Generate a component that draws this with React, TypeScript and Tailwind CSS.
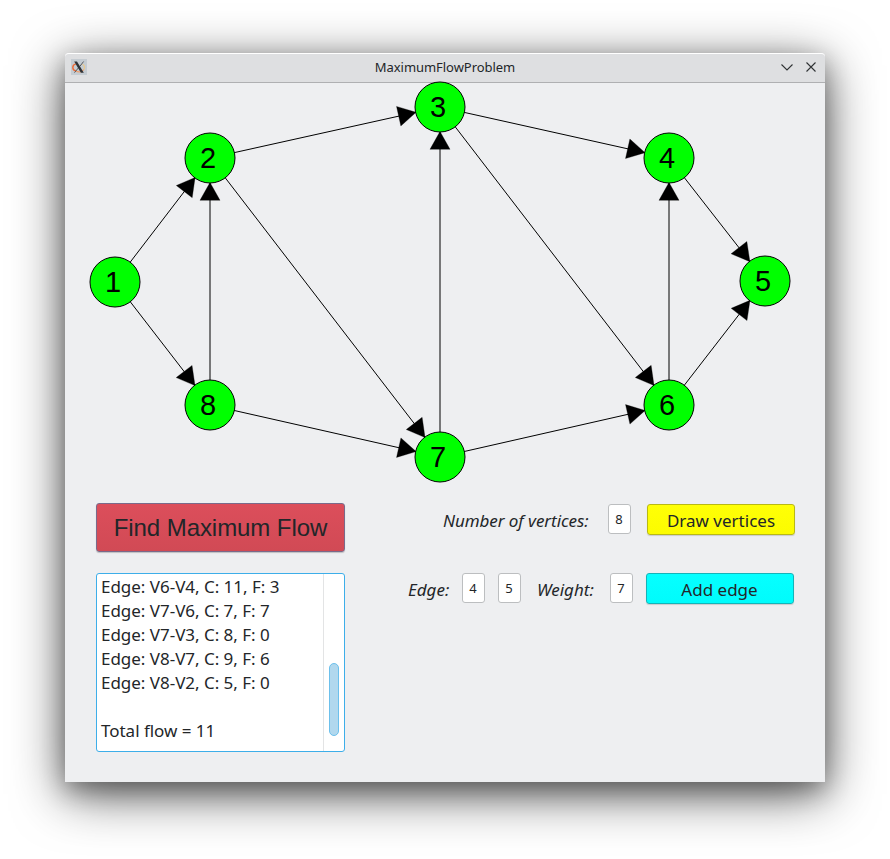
import React from "react";

const R = 25;
const ARROW = 20;

const nodes: Record<number, [number, number]> = {
  1: [115, 282],
  2: [210, 158],
  3: [440, 107],
  4: [669, 158],
  5: [765, 281],
  6: [669, 405],
  7: [440, 457],
  8: [210, 405],
};

const edges: [number, number][] = [
  [1, 2], [1, 8], [2, 3], [2, 7], [8, 2], [8, 7], [7, 3],
  [3, 4], [3, 6], [7, 6], [6, 4], [4, 5], [6, 5],
];

function Edge({ from, to }: { from: number; to: number }) {
  const [x1, y1] = nodes[from];
  const [x2, y2] = nodes[to];
  const d = Math.hypot(x2 - x1, y2 - y1);
  const ux = (x2 - x1) / d;
  const uy = (y2 - y1) / d;
  const tx = x2 - ux * (R - 0.5);
  const ty = y2 - uy * (R - 0.5);
  const h = ARROW * Math.sin(Math.PI / 3) + 0.5;
  const bx = tx - ux * h;
  const by = ty - uy * h;
  const w = ARROW / 2;
  return (
    <g>
      <line x1={x1} y1={y1} x2={tx} y2={ty} stroke="#000" strokeWidth={1} />
      <polygon
        points={`${tx},${ty} ${bx - uy * w},${by + ux * w} ${bx + uy * w},${by - ux * w}`}
        fill="#000"
        stroke="#000"
        strokeWidth={0.3}
      />
    </g>
  );
}

function Graph() {
  return (
    <svg className="block shrink-0 overflow-visible" width="760" height="405" viewBox="65 83 760 405">
      {edges.map(([a, b]) => (
        <Edge key={`${a}-${b}`} from={a} to={b} />
      ))}
      {Object.entries(nodes).map(([id, [x, y]]) => (
        <g key={id}>
          <circle cx={x} cy={y} r={R} fill="#00ff00" stroke="#000" strokeWidth={1} />
          <text x={x - 10} y={y + 10} className="font-['Liberation_Sans',sans-serif] text-[29px]">
            {id}
          </text>
        </g>
      ))}
    </svg>
  );
}

function XIcon() {
  return (
    <svg width="16" height="16" viewBox="0 0 16 16" className="block">
      <rect width="16" height="16" fill="#c5ccd2" />
      <path d="M4.800 4.800C.8 6 .8 10.800 4.800 12" fill="none" stroke="#ee6a35" strokeWidth="1.400" />
      <path d="M4.800 12c2.500 1.500 6.500 1.200 8-1.500" fill="none" stroke="#f0a070" strokeWidth="1.200" />
      <path d="M12.800 10.500c1.400-2 .6-4.200-1.200-5.300" fill="none" stroke="#ecc98a" strokeWidth="1.200" />
      <path d="M12.600 2.500 8.700 7.500M7.400 8.900 3.500 13.600" stroke="#55595d" strokeWidth="1" />
      <path d="M3.200 2.500h2.800l6.800 11.200H9.900z" fill="#2e3236" />
    </svg>
  );
}

const log = [
  "Edge: V6-V4, C: 11, F: 3",
  "Edge: V7-V6, C: 7, F: 7",
  "Edge: V7-V3, C: 8, F: 0",
  "Edge: V8-V7, C: 9, F: 6",
  "Edge: V8-V2, C: 5, F: 0",
  "\u00a0",
  "Total flow = 11",
];

function Field({ value, className = "" }: { value: string; className?: string }) {
  return (
    <div
      className={`flex h-[30px] w-[23px] shrink-0 items-center justify-center rounded-[3px] border border-[#bcbec0] bg-white pr-[1px] text-[13px] leading-none ${className}`}
    >
      {value}
    </div>
  );
}

export default function App() {
  return (
    <div className="h-[859px] w-[890px] overflow-hidden bg-white px-[65px] pt-[53px] font-['Noto_Sans',sans-serif] text-[#232629]">
      <div className="flex h-[729px] w-[760px] flex-col rounded-t-[4px] bg-[#eeeff1] shadow-[0_12px_52px_rgba(0,0,0,0.65),0_8px_24px_rgba(0,0,0,0.3)]">
        <div className="grid h-[30px] shrink-0 grid-cols-[1fr_auto_1fr] items-center rounded-t-[4px] border-t border-b border-t-white border-b-[#afb0b2] bg-[#dedfe1] pb-[2px] pl-[6px] pr-[8px]">
          <XIcon />
          <span className="pl-[2px] text-[13px] leading-none tracking-[-0.05px] text-[#232629]">MaximumFlowProblem</span>
          <div className="flex justify-end gap-[12px]">
            <svg width="12" height="12" viewBox="0 0 12 12" fill="none" stroke="#2f3234" strokeWidth="1.1">
              <path d="M0.500 3.500 6 9l5.500-5.500" />
            </svg>
            <svg width="12" height="12" viewBox="0 0 12 12" fill="none" stroke="#2f3234" strokeWidth="1.100">
              <path d="m1.500 1.500 9 9m0-9-9 9" />
            </svg>
          </div>
        </div>
        <Graph />
        <div className="flex pl-[31px] pt-[15px]">
          <div className="flex w-[249px] flex-col">
            <button className="h-[49px] rounded-[3px] border border-[#7a6a8a] bg-gradient-to-b from-[#dc4e5b] to-[#d14a55] font-['Liberation_Sans',sans-serif] text-[24px] leading-none tracking-[-0.07px] shadow-[0_1px_1px_rgba(0,0,0,0.2)]">
              Find Maximum Flow
            </button>
            <div className="mt-[21px] flex h-[179px] rounded-[3px] border border-[#3daee9] bg-white">
              <div className="flex-1 overflow-hidden whitespace-nowrap pl-[4px] pt-[1px] text-[17px] leading-[24px] tracking-[-0.02px]">
                {log.map((line, i) => (
                  <div key={i}>{line}</div>
                ))}
              </div>
              <div className="flex w-[21px] justify-center border-l border-[#e3e4e5] pt-[89px]">
                <div className="h-[73px] w-[10px] rounded-full border border-[#6cc0ec] bg-[#b1d8ee]" />
              </div>
            </div>
          </div>
          <div className="flex flex-col text-[17px] leading-[24px]">
            <div className="flex h-[70px] items-start pl-[98px]">
              <span className="w-[165px] whitespace-nowrap pt-[6px] italic tracking-[-0.06px]">Number of vertices:</span>
              <Field value="8" className="mt-[1px]" />
              <button className="ml-[16px] mt-[1px] h-[31px] w-[148px] rounded-[3px] border border-[#b9b914] bg-gradient-to-b from-[#ffff06] to-[#fcfc00] pt-[2px] leading-none shadow-[0_1px_1px_rgba(0,0,0,0.15)]">
                Draw vertices
              </button>
            </div>
            <div className="flex items-start pl-[63px]">
              <span className="w-[54px] whitespace-nowrap pt-[5px] italic">Edge:</span>
              <Field value="4" />
              <Field value="5" className="ml-[13px]" />
              <span className="ml-[16px] w-[73px] whitespace-nowrap pt-[5px] italic">Weight:</span>
              <Field value="7" />
              <button className="ml-[13px] h-[31px] w-[148px] rounded-[3px] border border-[#14b4b9] bg-gradient-to-b from-[#06ffff] to-[#00fcfc] pt-[2px] pr-[1px] leading-none shadow-[0_1px_1px_rgba(0,0,0,0.15)]">
                Add edge
              </button>
            </div>
          </div>
        </div>
      </div>
    </div>
  );
}
